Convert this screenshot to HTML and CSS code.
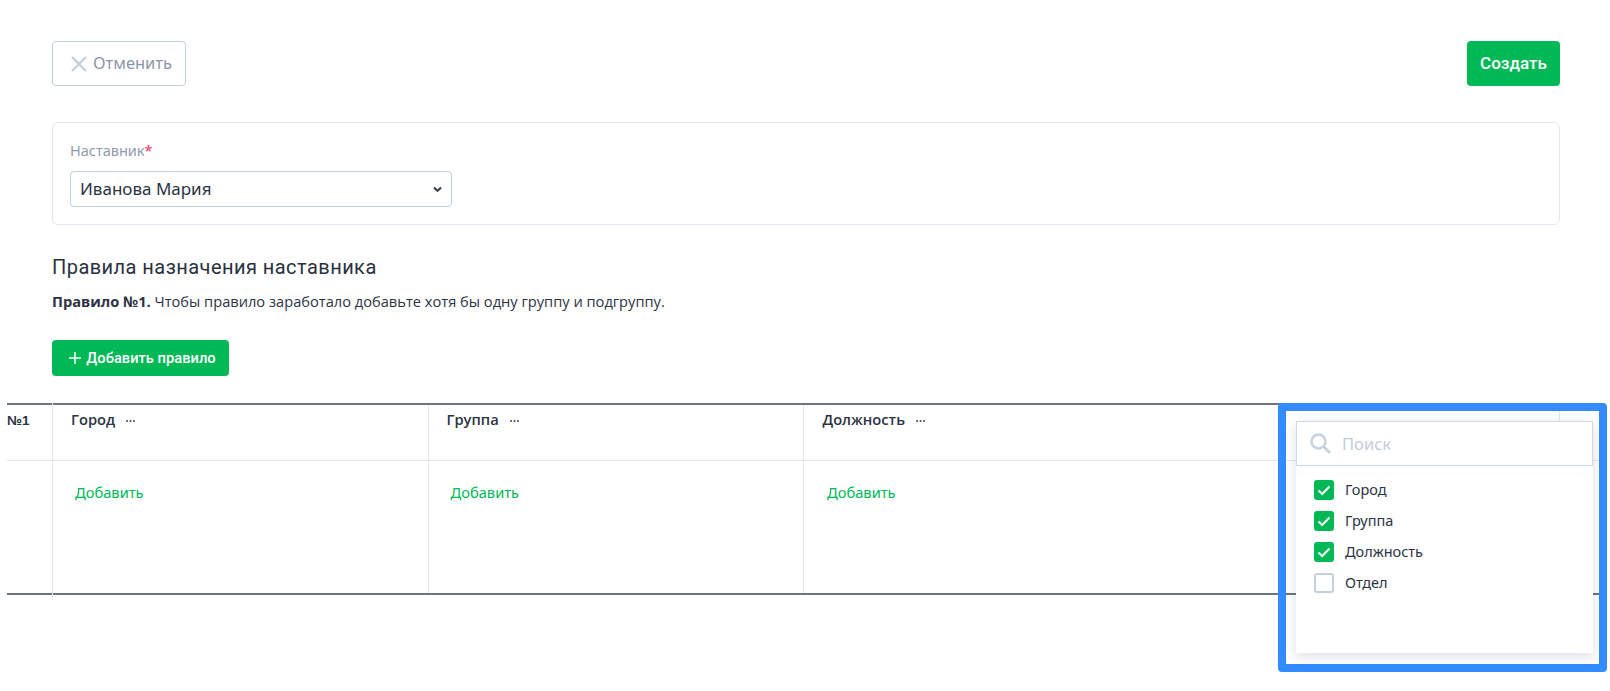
FILE: index.html
```html
<!DOCTYPE html>
<html lang="ru">
<head>
<meta charset="utf-8">
<title>Наставник</title>
<link rel="stylesheet" href="styles.css">
</head>
<body>
<div class="page">
  <div class="actions">
    <button class="btn btn-cancel"><svg class="ico-x" viewBox="0 0 16 16" width="16" height="16"><path d="M1 1L15 15M15 1L1 15" stroke="#c3cfdd" stroke-width="2.4" fill="none"/></svg><span class="lift">Отменить</span></button>
    <button class="btn btn-create"><span class="lift">Создать</span></button>
  </div>
  <div class="card">
    <div class="field-label">Наставник<span class="req">*</span></div>
    <div class="select"><span class="lift">Иванова Мария</span><svg viewBox="0 0 10 7" width="9" height="7"><path d="M1 1.2L5 5L9 1.2" stroke="#3a4252" stroke-width="2.4" fill="none"/></svg></div>
  </div>
  <h2 class="title">Правила назначения наставника</h2>
  <p class="hint"><b>Правило №1.</b> Чтобы правило заработало добавьте хотя бы одну группу и подгруппу.</p>
  <button class="btn-add"><svg viewBox="0 0 12 12" width="12" height="12"><path d="M6 0V12M0 6H12" stroke="#fff" stroke-width="1.5" fill="none"/></svg>Добавить правило</button>
</div>
<div class="table">
  <div class="row row-head">
    <div class="cell c-num">№1</div>
    <div class="cell c-col"><span class="th">Город</span><svg class="dots" viewBox="0 0 9 2" width="9" height="2"><circle cx="1" cy="1" r="1"/><circle cx="4.5" cy="1" r="1"/><circle cx="8" cy="1" r="1"/></svg></div>
    <div class="cell c-col"><span class="th">Группа</span><svg class="dots" viewBox="0 0 9 2" width="9" height="2"><circle cx="1" cy="1" r="1"/><circle cx="4.5" cy="1" r="1"/><circle cx="8" cy="1" r="1"/></svg></div>
    <div class="cell c-wide"><span class="th">Должность</span><svg class="dots" viewBox="0 0 9 2" width="9" height="2"><circle cx="1" cy="1" r="1"/><circle cx="4.5" cy="1" r="1"/><circle cx="8" cy="1" r="1"/></svg></div>
    <div class="cell c-end"></div>
  </div>
  <div class="row row-body">
    <div class="cell c-num"></div>
    <div class="cell c-col"><a class="add">Добавить</a></div>
    <div class="cell c-col"><a class="add">Добавить</a></div>
    <div class="cell c-wide"><a class="add">Добавить</a></div>
    <div class="cell c-end"></div>
  </div>
  <div class="tick"></div>
</div>
<div class="highlight"></div>
<div class="dropdown">
  <div class="search">
    <svg viewBox="0 0 21 21" width="21" height="21"><circle cx="8.5" cy="8.5" r="7" stroke="#c6d1df" stroke-width="2.4" fill="none"/><path d="M13.5 13.5L20 20" stroke="#c6d1df" stroke-width="2.6" fill="none"/></svg>
    <span>Поиск</span>
  </div>
  <ul class="options">
    <li><span class="check on"><svg viewBox="0 0 14 11" width="14" height="11"><path d="M1.5 5.5L5.2 9L12.5 1.5" stroke="#fff" stroke-width="2" fill="none"/></svg></span>Город</li>
    <li><span class="check on"><svg viewBox="0 0 14 11" width="14" height="11"><path d="M1.5 5.5L5.2 9L12.5 1.5" stroke="#fff" stroke-width="2" fill="none"/></svg></span>Группа</li>
    <li><span class="check on"><svg viewBox="0 0 14 11" width="14" height="11"><path d="M1.5 5.5L5.2 9L12.5 1.5" stroke="#fff" stroke-width="2" fill="none"/></svg></span>Должность</li>
    <li><span class="check"></span>Отдел</li>
  </ul>
</div>
</body>
</html>
```
FILE: styles.css
```css
* { box-sizing: border-box; }
html, body { margin: 0; padding: 0; height: 691px; overflow: hidden; background: #fff; }
body { font-family: "Noto Sans", sans-serif; color: #2c3345; position: relative; }
.page { padding: 41px 50px 0 52px; }
.actions { display: flex; justify-content: space-between; align-items: flex-start; }
.btn { height: 45px; border-radius: 4px; cursor: pointer; display: flex; align-items: center; }
.lift { margin-bottom: 2px; }
.btn-cancel { width: 134px; background: #fff; border: 1px solid #c3cfdd; color: #8a96a8; font-family: "Noto Sans", sans-serif; font-size: 16.5px; padding: 0 0 0 18px; gap: 6px; }
.btn-create { width: 93px; background: #00b956; border: 0; color: #fff; font-family: Roboto, sans-serif; font-weight: 500; font-size: 17px; justify-content: center; padding: 0; }
.card { margin-top: 36px; height: 103px; border: 1px solid #e2e7ef; border-radius: 6px; padding: 17px 17px 0; }
.field-label { font-size: 14.5px; line-height: 20px; color: #8f9bad; }
.req { color: #f0324f; }
.select { margin-top: 11px; width: 382px; height: 36px; border: 1px solid #c3cfdd; border-radius: 4px; display: flex; align-items: center; justify-content: space-between; padding: 0 9px 0 9px; font-size: 17px; color: #2c3345; }
.title { margin: 29px 0 0; font-family: Roboto, sans-serif; font-weight: 400; font-size: 20px; line-height: 26px; letter-spacing: 0.45px; color: #2a3040; }
.hint { margin: 11px 0 0; font-family: "Open Sans", sans-serif; font-size: 14.65px; line-height: 20px; color: #2c3345; }
.hint b { font-weight: 700; }
.btn-add { margin-top: 29px; width: 177px; height: 36px; background: #00b956; border: 0; border-radius: 4px; color: #fff; font-family: Roboto, sans-serif; font-weight: 500; font-size: 14.7px; display: flex; align-items: center; justify-content: center; gap: 5px; padding: 0 0 0 4px; }
.table { position: absolute; left: 7px; top: 403px; width: 1593px; height: 192px; border-top: 2px solid #6a7583; border-bottom: 2px solid #6a7583; }
.row { display: flex; }
.row-head { height: 56px; border-bottom: 1px solid #e2e6ee; }
.row-body { height: 132px; }
.cell { flex: none; border-right: 1px solid #e2e6ee; }
.c-num { width: 46px; font-family: "Liberation Sans", sans-serif; font-weight: 700; font-size: 13.5px; color: #2c3345; }
.c-col { width: 375.5px; padding-left: 18px; }
.c-wide { width: 756px; padding-left: 18.5px; }
.c-end { flex: 1; border-right: 0; }
.row-head .cell { padding-top: 3px; }
.row-head .c-num { padding-top: 8px; }
.th { font-family: "Open Sans", sans-serif; font-weight: 600; font-size: 14.7px; color: #2c3345; }
.dots { margin-left: 11px; vertical-align: 3px; fill: #3a4252; }
.row-body .c-col, .row-body .c-wide { padding: 20px 0 0 22px; }
.row-body .c-wide { padding-left: 23px; }
.add { font-size: 14.7px; line-height: 22px; color: #00b956; }
.tick { position: absolute; left: 45px; top: -2px; height: 197px; width: 1px; background: #e2e6ee; }
.highlight { position: absolute; left: 1278px; top: 403px; width: 329px; height: 269px; border: 8px solid #338cff; border-radius: 4px; }
.dropdown { position: absolute; left: 1296px; top: 421px; width: 297px; height: 232px; background: #fff; box-shadow: 0 4px 12px rgba(40, 55, 85, 0.16); }
.search { height: 45px; border: 1px solid #cfd9e6; display: flex; align-items: center; padding-left: 13px; gap: 11px; font-size: 16.5px; color: #c3cddb; }
.options { list-style: none; margin: 14px 0 0; padding: 0 0 0 18px; }
.options li { height: 31px; display: flex; align-items: flex-start; font-size: 14.5px; line-height: 19px; color: #2c3345; gap: 11px; }
.check { flex: none; width: 20px; height: 20px; border-radius: 3px; border: 2px solid #c3cfdd; display: flex; align-items: center; justify-content: center; }
.check.on { background: #00b956; border: 0; }
```
